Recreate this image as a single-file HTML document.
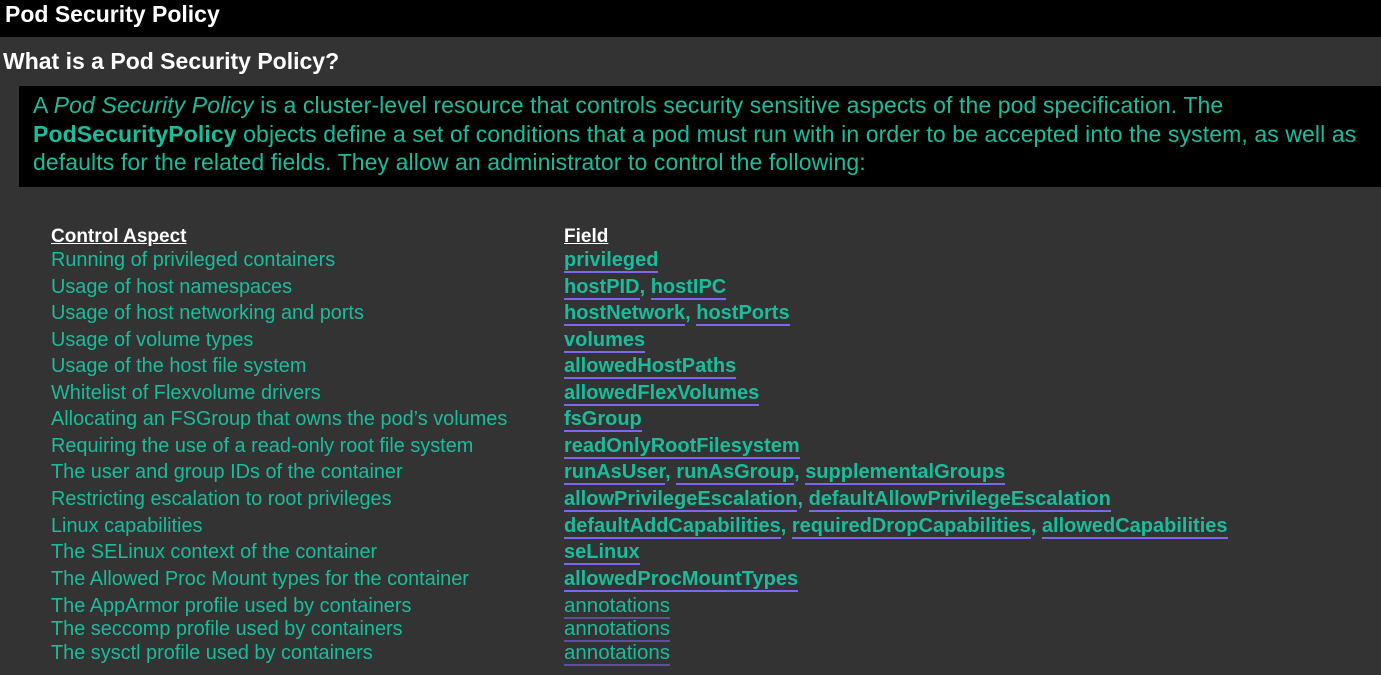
<!DOCTYPE html>
<html><head><meta charset="utf-8"><style>
body{margin:0;width:1381px;height:675px;background:#333;overflow:hidden;font-family:"Liberation Sans",sans-serif;position:relative}
.top{position:absolute;left:0;top:0;width:1381px;height:37px;background:#000;color:#fff;font-weight:bold;font-size:23px;line-height:28px}
.top span{position:absolute;left:5px;top:0px}
h2{position:absolute;left:3px;top:47px;margin:0;color:#fff;font-size:23px;font-weight:bold;line-height:28px}
.intro{position:absolute;left:19px;top:86px;width:1362px;height:101px;background:#000;color:#1abc9c;font-size:23px;line-height:28.5px}
.intro div{position:absolute;left:14px;top:5px;white-space:nowrap;letter-spacing:0.1px}
.r{position:absolute;font-size:19.9px;color:#1abc9c;white-space:nowrap;line-height:22px;margin-top:1px}
.l{left:51px}.f{left:564px;font-weight:bold;font-size:20px}
.f a{color:#1abc9c;text-decoration:none;border-bottom:2px solid #7b68ee}
.a{left:564px;font-size:20.5px}.a span{border-bottom:2px solid #5a4fa0}
.hd{color:#fff;font-weight:bold;text-decoration:underline}
</style></head><body>
<div class="top"><span>Pod Security Policy</span></div>
<h2>What is a Pod Security Policy?</h2>
<div class="intro"><div>A <i>Pod Security Policy</i> is a cluster-level resource that controls security sensitive aspects of the pod specification. The<br><b>PodSecurityPolicy</b> objects define a set of conditions that a pod must run with in order to be accepted into the system, as well as<br>defaults for the related fields. They allow an administrator to control the following:</div></div>
<div class="r l hd" style="top:225px;font-size:19px">Control Aspect</div>
<div class="r f hd" style="top:225px;font-size:19px">Field</div>
<div class="r l" style="top:248px">Running of privileged containers</div><div class="r f" style="top:248px"><a>privileged</a></div>
<div class="r l" style="top:275px">Usage of host namespaces</div><div class="r f" style="top:275px"><a>hostPID</a>, <a>hostIPC</a></div>
<div class="r l" style="top:301px">Usage of host networking and ports</div><div class="r f" style="top:301px"><a>hostNetwork</a>, <a>hostPorts</a></div>
<div class="r l" style="top:328px">Usage of volume types</div><div class="r f" style="top:328px"><a>volumes</a></div>
<div class="r l" style="top:354px">Usage of the host file system</div><div class="r f" style="top:354px"><a>allowedHostPaths</a></div>
<div class="r l" style="top:381px">Whitelist of Flexvolume drivers</div><div class="r f" style="top:381px"><a>allowedFlexVolumes</a></div>
<div class="r l" style="top:407px">Allocating an FSGroup that owns the pod’s volumes</div><div class="r f" style="top:407px"><a>fsGroup</a></div>
<div class="r l" style="top:434px">Requiring the use of a read-only root file system</div><div class="r f" style="top:434px"><a>readOnlyRootFilesystem</a></div>
<div class="r l" style="top:460px">The user and group IDs of the container</div><div class="r f" style="top:460px"><a>runAsUser</a>, <a>runAsGroup</a>, <a>supplementalGroups</a></div>
<div class="r l" style="top:487px">Restricting escalation to root privileges</div><div class="r f" style="top:487px"><a>allowPrivilegeEscalation</a>, <a>defaultAllowPrivilegeEscalation</a></div>
<div class="r l" style="top:514px">Linux capabilities</div><div class="r f" style="top:514px"><a>defaultAddCapabilities</a>, <a>requiredDropCapabilities</a>, <a>allowedCapabilities</a></div>
<div class="r l" style="top:540px">The SELinux context of the container</div><div class="r f" style="top:540px"><a>seLinux</a></div>
<div class="r l" style="top:567px">The Allowed Proc Mount types for the container</div><div class="r f" style="top:567px"><a>allowedProcMountTypes</a></div>
<div class="r l" style="top:594px">The AppArmor profile used by containers</div><div class="r a" style="top:594px"><span>annotations</span></div>
<div class="r l" style="top:617px">The seccomp profile used by containers</div><div class="r a" style="top:617px"><span>annotations</span></div>
<div class="r l" style="top:641px">The sysctl profile used by containers</div><div class="r a" style="top:641px"><span>annotations</span></div>
</body></html>
